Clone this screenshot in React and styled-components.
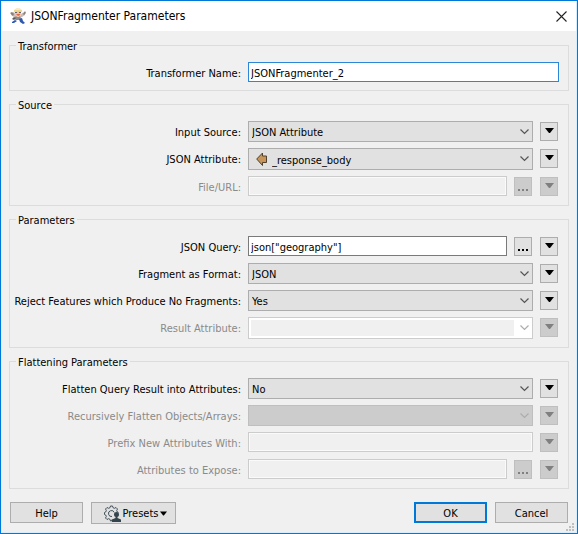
import React from "react";
import styled, { createGlobalStyle, css } from "styled-components";

const GlobalStyle = createGlobalStyle`
  *, *::before, *::after { box-sizing: border-box; }
  body { margin: 0; background: #f0f0f0; }
  body, button, input, select {
    font: 11px/15px "DejaVu Sans Condensed", "Liberation Sans", sans-serif;
    color: #000;
  }
`;

const Dialog = styled.div`
  position: relative;
  display: flex;
  flex-direction: column;
  min-height: 100vh;
  background: #f0f0f0;
  border: 1px solid #0078d7;
  box-shadow: inset 0 0 0 1px #d9ecfa;
`;

const TitleBar = styled.header`
  display: flex;
  align-items: center;
  gap: 5px;
  height: 30px;
  padding: 0 8px;
  margin: 0 1px;
  background: #fff;
`;

const Title = styled.h1`
  flex: 1;
  margin: 0;
  font-size: 12px;
  line-height: 16px;
  font-weight: normal;
`;

const CloseButton = styled.button`
  display: flex;
  padding: 2px;
  margin-right: -1px;
  border: 0;
  background: transparent;
`;

const Form = styled.form`
  display: flex;
  flex-direction: column;
  flex: 1;
  padding: 7px 8px 0;
`;

const Group = styled.fieldset`
  min-width: 0;
  margin: 0 0 6px;
  padding: 9px 9px 8px 3px;
  border: 1px solid #dcdcdc;
`;

const GroupTitle = styled.legend`
  margin-left: 3px;
  padding: 2px 2px 0;
  line-height: 13px;
`;

const Rows = styled.div`
  display: grid;
  gap: 6px;
`;

const Row = styled.div`
  display: grid;
  grid-template-columns: 228px 1fr;
  column-gap: 7px;
  align-items: start;
  min-height: ${(p) => (p.$compact ? 20 : 21)}px;
`;

const Label = styled.label`
  padding-top: 4px;
  line-height: 15px;
  text-align: right;
  white-space: nowrap;
  color: ${(p) => (p.$off ? "#8a8a8a" : "#000")};
`;

const Controls = styled.div`
  display: flex;
  align-items: flex-start;
  gap: 7px;
  min-width: 0;
  padding-right: ${(p) => (p.$menu ? 1 : 0)}px;
`;

const TextBox = styled.input`
  flex: 1;
  min-width: 0;
  width: 100%;
  height: 20px;
  padding: 2px 2px 0;
  border: 1px solid ${(p) => (p.$active ? "#2b88d8" : "#7a7a7a")};
  border-radius: 0;
  outline: 0;
  background: #fff;

  &:disabled {
    background: #f0f0f0;
    border-color: #cccccc;
    box-shadow: inset 0 0 0 1px #fafafa;
  }
`;

const SelectFrame = styled.div`
  flex: 1;
  position: relative;
  min-width: 0;
`;

const SelectBox = styled.select`
  display: block;
  appearance: none;
  width: 100%;
  height: ${(p) => (p.$tall ? 22 : 21)}px;
  padding: 2px 20px 0 ${(p) => (p.$icon ? 23 : 3)}px;
  border: 1px solid #adadad;
  border-radius: 0;
  background: #e1e1e1;

  &:disabled {
    opacity: 1;
    border-color: #bfbfbf;
    background: #cccccc;
  }

  ${(p) =>
    p.$editable &&
    css`
      &:disabled {
        border-color: #cccccc;
        background: linear-gradient(#f0f0f0, #f0f0f0) 2px 2px /
          calc(100% - 20px) calc(100% - 4px) no-repeat #fff;
      }
    `}
`;

const Chevron = styled.svg`
  position: absolute;
  top: 8px;
  right: 4px;
  pointer-events: none;
`;

const AttributeIcon = styled.svg`
  position: absolute;
  top: 4px;
  left: 8px;
  pointer-events: none;
`;

const MenuButtons = styled.div`
  display: flex;
  gap: 8px;
  padding-top: 1px;
`;

const SmallButton = styled.button`
  display: flex;
  justify-content: center;
  align-items: ${(p) => (p.$dots ? "flex-end" : "flex-start")};
  flex: none;
  width: 18px;
  height: 19px;
  padding: ${(p) => (p.$dots ? "0 0 4px" : "5px 0 0")};
  border: 1px solid #adadad;
  background: #e1e1e1;
  color: #000;

  &:disabled {
    border-color: #bfbfbf;
    background: #cccccc;
    color: #808080;
  }
`;

const ButtonBar = styled.footer`
  display: flex;
  align-items: flex-start;
  gap: 8px;
  padding: 7px 1px 8px;
`;

const Spacer = styled.div`
  flex: 1;
`;

const PushButton = styled.button`
  display: flex;
  align-items: center;
  justify-content: center;
  width: 73px;
  height: 21px;
  padding: 1px 0 0;
  border: ${(p) => (p.$primary ? "2px solid #0078d7" : "1px solid #adadad")};
  background: #e1e1e1;
`;

const PresetsButton = styled(PushButton)`
  gap: 2px;
  width: 85px;
  height: 22px;
  padding-left: 4px;
`;

const SizeGrip = styled.svg`
  position: absolute;
  right: 3px;
  bottom: 2px;
`;

const DownTriangle = ({ size = 9 }) => (
  <svg width={size} height="5" viewBox="0 0 9 5" aria-hidden="true">
    <path d="M0 0h9L5 5H4z" fill="currentColor" />
  </svg>
);

const Dots = () => (
  <svg width="10" height="2" viewBox="0 0 10 2" aria-hidden="true">
    <path d="M0 0h2v2H0zM4 0h2v2H4zM8 0h2v2H8z" fill="currentColor" />
  </svg>
);

const AppLogo = () => (
  <svg width="16" height="16" viewBox="0 0 16 16" aria-hidden="true">
    <path d="M1 5l3-1 2 3v3L4 9 1 7zM15 4l-3 1-2 3v2l2-1 3-2z" fill="#c9bdb8" />
    <path d="M0 5l2-1 2 2-1 2zM15 3l1 2-2 2-1-1z" fill="#8c7f7a" />
    <path d="M6 8h4l1 3-2 1H6L4 11z" fill="#8b8d93" />
    <path d="M5 3h6v4L9 9H7L5 7z" fill="#f3c29e" />
    <path d="M4 2l2-1h4l2 1v2l-3-1-5 1z" fill="#eed98e" />
    <path d="M6 0h4l1 2H5z" fill="#f3ead0" />
    <path d="M5 4h2v1H5zM9 4h2v1H9z" fill="#65606c" />
    <path d="M6 6h4v1L8 8z" fill="#dc6a50" />
    <path d="M4 9l2 1-2 2-2-1z" fill="#5d5954" />
    <path d="M5 12l2 1-3 2H2v-1zM9 11l3-1 1 3 2 2-2 1-3-2z" fill="#2f57b4" />
  </svg>
);

const GearUser = () => (
  <svg width="17" height="17" viewBox="0 0 17 17" fill="none" aria-hidden="true">
    <path
      d="M8 14.500L7.500 16H6.500L6 14.300 4.500 13.700 3 14.500 1.500 13 2.300 11.500 1.700 10 .5 9.500V7.500L1.700 7 2.300 5.500 1.500 4 3 2.500 4.500 3.300 6 2.700 6.500 1H8.500L9 2.700 10.500 3.300 12 2.500 13.500 4 12.700 5.500 13.300 7 14.500 7.500"
      stroke="#43525b"
      strokeLinejoin="round"
    />
    <path d="M8 11.500A3 3 0 1 1 10.300 7.500" stroke="#43525b" />
    <circle cx="12.500" cy="9.500" r="2.500" fill="#34444d" />
    <path d="M11.500 11h2v2l3.500 1.500V17H8v-2.500l3.500-1.500z" fill="#34444d" />
  </svg>
);

function SelectField({ id, value, off, icon, editable }) {
  return (
    <SelectFrame>
      <SelectBox id={id} disabled={off} $icon={icon} $editable={editable} $tall={icon || editable}>
        <option>{value}</option>
      </SelectBox>
      {icon && (
        <AttributeIcon width="13" height="15" viewBox="0 0 13 15" aria-hidden="true">
          <path d="M.7 7L6.500 1v3H10.500v6.500H6.500v3z" fill="#c5955a" stroke="#51402c" />
        </AttributeIcon>
      )}
      <Chevron width="9" height="6" viewBox="0 0 9 6" aria-hidden="true">
        <path d="M.5.500l4 4 4-4" fill="none" stroke={off ? "#adadad" : "#555"} strokeWidth="1.200" />
      </Chevron>
    </SelectFrame>
  );
}

function Field({ id, label, kind = "select", value = "", off, active, icon, editable, browse, menu = true }) {
  return (
    <Row $compact={!menu}>
      <Label htmlFor={id} $off={off}>{label}:</Label>
      <Controls $menu={menu}>
        {kind === "text" ? (
          <TextBox id={id} type="text" defaultValue={value} disabled={off} $active={active} />
        ) : (
          <SelectField id={id} value={value} off={off} icon={icon} editable={editable} />
        )}
        {menu && (
          <MenuButtons>
            {browse && (
              <SmallButton type="button" disabled={off} aria-label={`Browse ${label}`} $dots>
                <Dots />
              </SmallButton>
            )}
            <SmallButton type="button" disabled={off} aria-label={`${label} options`}>
              <DownTriangle />
            </SmallButton>
          </MenuButtons>
        )}
      </Controls>
    </Row>
  );
}

const groups = [
  {
    title: "Transformer",
    fields: [
      { id: "name", label: "Transformer Name", kind: "text", value: "JSONFragmenter_2", active: true, menu: false },
    ],
  },
  {
    title: "Source",
    fields: [
      { id: "source", label: "Input Source", value: "JSON Attribute" },
      { id: "attribute", label: "JSON Attribute", value: "_response_body", icon: true },
      { id: "file", label: "File/URL", kind: "text", off: true, browse: true },
    ],
  },
  {
    title: "Parameters",
    fields: [
      { id: "query", label: "JSON Query", kind: "text", value: 'json["geography"]', browse: true },
      { id: "format", label: "Fragment as Format", value: "JSON" },
      { id: "reject", label: "Reject Features which Produce No Fragments", value: "Yes" },
      { id: "result", label: "Result Attribute", off: true, editable: true },
    ],
  },
  {
    title: "Flattening Parameters",
    fields: [
      { id: "flatten", label: "Flatten Query Result into Attributes", value: "No" },
      { id: "recursive", label: "Recursively Flatten Objects/Arrays", off: true },
      { id: "prefix", label: "Prefix New Attributes With", kind: "text", off: true },
      { id: "expose", label: "Attributes to Expose", kind: "text", off: true, browse: true },
    ],
  },
];

export default function App() {
  return (
    <>
      <GlobalStyle />
      <Dialog role="dialog" aria-labelledby="dialog-title">
        <TitleBar>
          <AppLogo />
          <Title id="dialog-title">JSONFragmenter Parameters</Title>
          <CloseButton type="button" aria-label="Close">
            <svg width="11" height="11" viewBox="0 0 11 11" aria-hidden="true">
              <path d="M.5.500l10 10M10.500.500l-10 10" stroke="#222" strokeWidth="1.100" />
            </svg>
          </CloseButton>
        </TitleBar>
        <Form onSubmit={(e) => e.preventDefault()}>
          {groups.map((group) => (
            <Group key={group.title}>
              <GroupTitle>{group.title}</GroupTitle>
              <Rows>
                {group.fields.map((field) => (
                  <Field key={field.id} {...field} />
                ))}
              </Rows>
            </Group>
          ))}
          <ButtonBar>
            <PushButton type="button">Help</PushButton>
            <PresetsButton type="button">
              <GearUser />
              Presets
              <DownTriangle size={7} />
            </PresetsButton>
            <Spacer />
            <PushButton type="submit" $primary>OK</PushButton>
            <PushButton type="button">Cancel</PushButton>
          </ButtonBar>
        </Form>
        <SizeGrip width="8" height="8" viewBox="0 0 8 8" aria-hidden="true">
          <path d="M6 0h2v2H6zM3 3h2v2H3zM6 3h2v2H6zM0 6h2v2H0zM3 6h2v2H3zM6 6h2v2H6z" fill="#bfbfbf" />
        </SizeGrip>
      </Dialog>
    </>
  );
}
